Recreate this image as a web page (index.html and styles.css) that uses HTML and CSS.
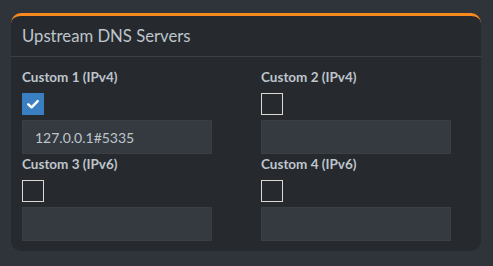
FILE: index.html
```html
<!DOCTYPE html>
<html lang="en">

<head>
    <title>Upstream DNS Servers</title>
    <link rel="stylesheet" href="styles.css">
</head>

<body>
    <!--DNS settings box-->
    <div class="box">
        <div class="box-header">
            <h3 class="box-title">Upstream DNS Servers</h3>
        </div>

        <div class="box-body">
            <div class="field">
                <label class="field-label">Custom 1 (IPv4)</label>
                <span class="check checked">
                    <svg width="14" height="14" viewBox="0 0 14 14">
                        <path d="M2.3 7.3 L5.6 10.3 L11.7 4.2" fill="none" stroke="#fff" stroke-width="2.5"
                            stroke-linecap="round" stroke-linejoin="round" />
                    </svg>
                </span>
                <input type="text" class="form-control" value="127.0.0.1#5335">
            </div>

            <div class="field">
                <label class="field-label">Custom 2 (IPv4)</label>
                <span class="check"></span>
                <input type="text" class="form-control" value="">
            </div>

            <div class="field">
                <label class="field-label">Custom 3 (IPv6)</label>
                <span class="check"></span>
                <input type="text" class="form-control" value="">
            </div>

            <div class="field">
                <label class="field-label">Custom 4 (IPv6)</label>
                <span class="check"></span>
                <input type="text" class="form-control" value="">
            </div>
        </div>
    </div>
</body>

</html>
```

FILE: styles.css
```css
/*global styling*/
* {
    box-sizing: border-box;
    font-family: "Lato", sans-serif;
}

body {
    margin: 0;
    padding: 13px 12px 0 11px;
    background-color: #2e343a;
    color: #bec5cb;
}

/*box styling*/
.box {
    background-color: #262a2f;
    border-top: 3px solid #f7891f;
    border-radius: 10px;
    width: 470px;
}

.box-header {
    padding: 10px 11px;
    border-bottom: 1px solid #3a3f45;
}

.box-title {
    margin: 0;
    font-size: 16.7px;
    font-weight: 400;
    line-height: 20px;
}

/*form grid*/
.box-body {
    display: grid;
    grid-template-columns: 210px 210px;
    column-gap: 29px;
    padding: 10px 11px 10px 11px;
}

.field {
    display: flex;
    flex-direction: column;
    align-items: flex-start;
}

.field-label {
    font-size: 13.5px;
    font-weight: 700;
    line-height: 20px;
    margin-bottom: 6px;
}

/*checkbox styling*/
.check {
    width: 22px;
    height: 22px;
    border: 1px solid #ddd8d1;
    display: flex;
    align-items: center;
    justify-content: center;
    margin-bottom: 5px;
}

.check.checked {
    background-color: #3a7fc1;
    border-color: #3a7fc1;
}

/*input styling*/
.form-control {
    width: 190px;
    height: 34px;
    padding: 6px 12px;
    background-color: #353a41;
    border: 1px solid #3a3f46;
    color: #bec5cb;
    font-size: 14px;
}
```
